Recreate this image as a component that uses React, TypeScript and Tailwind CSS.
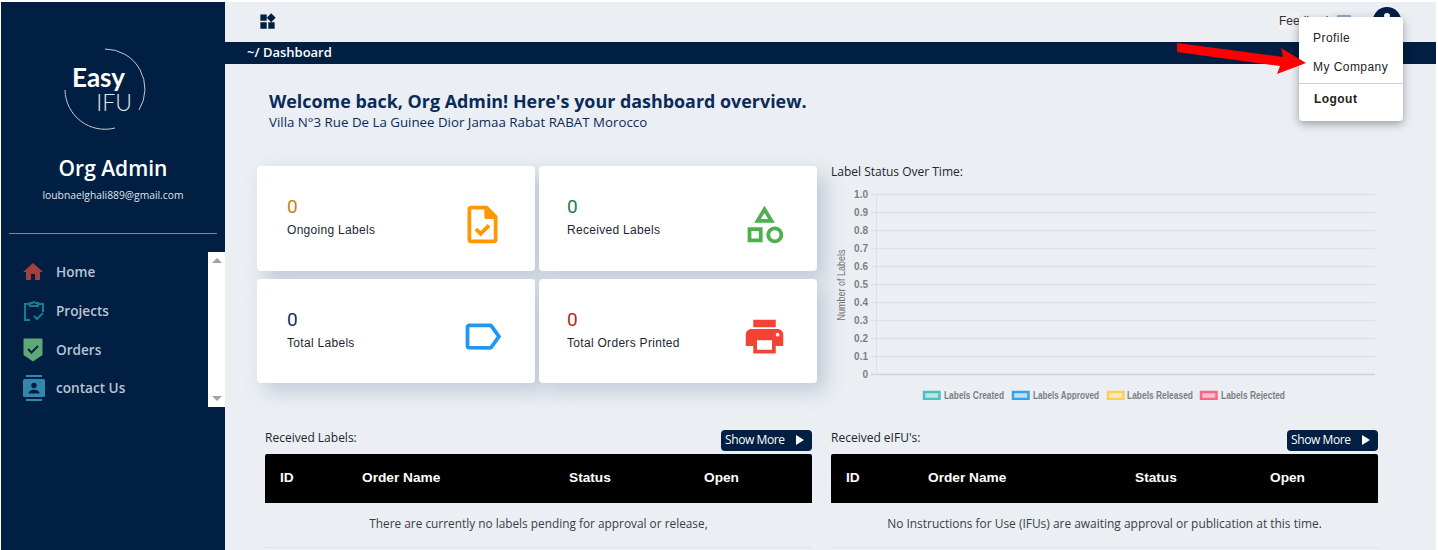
import { MdWidgets, MdOutlineCategory, MdOutlineLabel, MdPrint, MdHome } from 'react-icons/md'

const segoe = { fontFamily: '"Open Sans", sans-serif' }
const arial = { fontFamily: '"Liberation Sans", sans-serif' }

function FileCheckIcon() {
  return (
    <svg viewBox="0 0 24 24" className="w-[45px] h-[45px] ml-px text-[#ff9800]" fill="none" stroke="currentColor">
      <path d="M6 3h8l5 5v12a1 1 0 0 1-1 1H6a1 1 0 0 1-1-1V4a1 1 0 0 1 1-1z" strokeWidth="2" strokeLinejoin="round" />
      <path d="M14 3l5 5h-5z" fill="currentColor" strokeWidth="2" strokeLinejoin="round" />
      <path d="M8.500 14.500l2.500 2.500 4.500-4.500" strokeWidth="2" />
    </svg>
  )
}

function ProjectsIcon() {
  return (
    <svg viewBox="0 0 22 22" className="w-[22px] h-[22px] text-[#0f7f96]" fill="none" stroke="currentColor" strokeWidth="2">
      <path d="M6 4H2v16h5" />
      <path d="M16 4h4v8" />
      <path d="M7 6V3h2.500a1.600 1.600 0 0 1 3 0H15v3z" />
      <path d="M11 16l3 3 6-6" />
    </svg>
  )
}

function OrdersIcon() {
  return (
    <svg viewBox="0 0 20 24" className="w-[20px] h-[24px]">
      <path d="M1.500 0.500h17a1 1 0 0 1 1 1V17l-9.500 6.500L0.500 17V1.500a1 1 0 0 1 1-1z" fill="#5fa777" />
      <path d="M5 11l3.500 3.500L15 8" fill="none" stroke="#0c2340" strokeWidth="2" />
    </svg>
  )
}

function ContactIcon() {
  return (
    <svg viewBox="0 0 22 26" className="w-[22px] h-[26px] text-[#3387ad]">
      <rect x="3" y="0" width="16" height="2" fill="currentColor" />
      <rect x="3" y="24" width="16" height="2" fill="currentColor" />
      <rect x="0" y="4" width="22" height="18" rx="1.500" fill="currentColor" />
      <circle cx="11" cy="10.500" r="2.700" fill="#001f42" />
      <path d="M5.500 18.500c0-2.500 3-3.700 5.500-3.700s5.500 1.200 5.500 3.700z" fill="#001f42" />
    </svg>
  )
}

function Logo() {
  return (
    <div className="relative w-[84px] h-[84px]">
      <svg viewBox="0 0 84 84" className="absolute inset-0 w-full h-full" fill="none" stroke="#c4ccd6" strokeWidth="1">
        <path d="M42 2A40 40 0 0 1 76 63" />
        <path d="M2 43A40 40 0 0 0 52 81" />
      </svg>
      <div className="relative flex flex-col items-end pr-[15px] pt-[17px] text-white" style={{ fontFamily: 'Lato, sans-serif' }}>
        <span className="text-[26px] font-bold leading-[26px] mr-[7px]">Easy</span>
        <span className="text-[23px] font-light leading-[24px] text-[#e3e7ec]">IFU</span>
      </div>
    </div>
  )
}

function Sidebar() {
  const items = [
    { label: 'Home', icon: <MdHome className="w-[24px] h-[24px] -ml-[2px] text-[#a33f3f]" /> },
    { label: 'Projects', icon: <ProjectsIcon /> },
    { label: 'Orders', icon: <OrdersIcon /> },
    { label: 'contact Us', icon: <ContactIcon /> },
  ]
  return (
    <aside className="w-[224px] shrink-0 bg-[#001f42] flex flex-col" style={segoe}>
      <div className="flex justify-center pt-[45px] pr-[16px]">
        <Logo />
      </div>
      <div className="mt-[23px] text-center text-[21px] font-semibold leading-[28px] text-white">Org Admin</div>
      <div className="mt-[6px] text-center text-[10.300px] leading-[14px] text-[#dfe5ec]">loubnaelghali889@gmail.com</div>
      <div className="mx-[8px] mt-[31px] h-px bg-[#7f8b9c]" />
      <div className="mt-[18px] flex h-[155px]">
        <ul className="flex-1 pl-[22px] pt-px">
          {items.map((item) => (
            <li key={item.label} className="flex items-center h-[38.700px]">
              <span className="w-[33px] flex justify-start">{item.icon}</span>
              <span className="text-[13.600px] font-semibold text-[#b9c4d4]">{item.label}</span>
            </li>
          ))}
        </ul>
        <div className="w-[17px] bg-white flex flex-col items-center justify-between py-[6px]">
          <span className="w-0 h-0 border-x-[5px] border-x-transparent border-b-[5px] border-b-[#a3a3a3]" />
          <span className="w-0 h-0 border-x-[5px] border-x-transparent border-t-[5px] border-t-[#a3a3a3]" />
        </div>
      </div>
    </aside>
  )
}

function StatCard({ value, label, color, icon, narrow }: { value: string; label: string; color: string; icon: React.ReactNode; narrow?: boolean }) {
  return (
    <div className={`h-full bg-white rounded-[4px] shadow-[8px_8px_20px_rgba(80,105,140,0.28)] flex items-center justify-between pr-[30px] ${narrow ? 'pl-[28px]' : 'pl-[30px]'}`}>
      <div className="flex flex-col mb-[3px]">
        <span className="text-[19px] leading-[24px]" style={{ color, fontFamily: 'Roboto, sans-serif' }}>{value}</span>
        <span className="mt-[3px] text-[12px] leading-[16px] text-[#1c2733] tracking-[0.3px]" style={arial}>{label}</span>
      </div>
      <div className="mt-[12px]">{icon}</div>
    </div>
  )
}

function Chart() {
  const ticks = ['1.0', '0.9', '0.8', '0.7', '0.6', '0.5', '0.4', '0.3', '0.2', '0.1', '0']
  const legend = [
    { label: 'Labels Created', box: 92, text: 113, width: 60, color: '#4bc0c0', inner: '#b7e6e6' },
    { label: 'Labels Approved', box: 181, text: 202, width: 66, color: '#36a2eb', inner: '#bfe0f8' },
    { label: 'Labels Released', box: 276, text: 296, width: 66, color: '#ffce56', inner: '#ffebbb' },
    { label: 'Labels Rejected', box: 369, text: 390, width: 64, color: '#ff6384', inner: '#ffc1ce' },
  ]
  return (
    <svg viewBox="0 0 547 219" className="w-[547px] h-[219px]" style={arial}>
      {ticks.map((t, i) => (
        <g key={t}>
          <line x1="40" x2="544" y1={13.500 + i * 18} y2={13.500 + i * 18} stroke={i === 10 ? '#cfd3d8' : '#dde1e5'} strokeWidth="1.300" />
          <text x="37" y={17 + i * 18} textAnchor="end" fontSize="10" fontWeight="700" fill="#7a7f85">{t}</text>
        </g>
      ))}
      <line x1="45.500" x2="45.500" y1="13" y2="194" stroke="#dde1e5" />
      <text transform="translate(14 104) rotate(-90)" textAnchor="middle" fontSize="10" fill="#6d7278" textLength="71" lengthAdjust="spacingAndGlyphs">Number of Labels</text>
      {legend.map((l) => (
        <g key={l.label}>
          <rect x={l.box + 1} y="211" width="15.500" height="7" fill={l.inner} stroke={l.color} strokeWidth="2.500" />
          <text x={l.text} y="218" fontSize="10.500" fontWeight="700" fill="#7a7f85" textLength={l.width} lengthAdjust="spacingAndGlyphs">{l.label}</text>
        </g>
      ))}
    </svg>
  )
}

function TablePanel({ title, empty, textSize }: { title: string; empty: string; textSize: string }) {
  return (
    <div className="w-[547px]">
      <div className="flex justify-between items-start h-[24px]">
        <span className="text-[12px] leading-[16px] text-[#20262d]" style={segoe}>{title}</span>
        <button className="h-[21px] w-[91px] pl-[4px] pr-[8px] pb-px rounded-[4px] bg-[#001f42] text-white text-[12px] tracking-[-0.4px] flex items-center justify-between" style={segoe}>
          Show More
          <span className="w-0 h-0 border-y-[5px] border-y-transparent border-l-[8px] border-l-white" />
        </button>
      </div>
      <table className="w-full table-fixed border-collapse">
        <colgroup>
          <col className="w-[82px]" />
          <col className="w-[207px]" />
          <col className="w-[135px]" />
          <col />
        </colgroup>
        <thead>
          <tr className="bg-black text-white text-left text-[13.700px] h-[49px]" style={arial}>
            <th className="pl-[15px] font-bold rounded-tl-[2px]">ID</th>
            <th className="pl-[15px] font-bold">Order Name</th>
            <th className="pl-[15px] font-bold">Status</th>
            <th className="pl-[15px] font-bold rounded-tr-[2px]">Open</th>
          </tr>
        </thead>
        <tbody>
          <tr className="border-b border-[#dfe3e7]">
            <td colSpan={4} className={`h-[44px] pb-[2px] text-center text-[#3a4048] ${textSize}`} style={segoe}>{empty}</td>
          </tr>
        </tbody>
      </table>
    </div>
  )
}

function ProfileMenu() {
  return (
    <div className="absolute left-[1074px] top-[15px] w-[104px] h-[104px] bg-white rounded-[4px] shadow-[0_3px_10px_rgba(0,0,0,0.35)] pt-[6px] text-[12px] text-[#222] tracking-[0.45px]" style={arial}>
      <div className="pl-[14px] h-[29px] flex items-center">Profile</div>
      <div className="pl-[14px] h-[29px] flex items-center">My Company</div>
      <div className="mt-[2px] border-t border-[#cfcfcf] pl-[15px] h-[30px] flex items-center font-bold">Logout</div>
    </div>
  )
}

export default function App() {
  return (
    <div className="h-[550px] w-[1438px] overflow-hidden bg-white pt-[2px] pl-px flex">
      <Sidebar />
      <main className="relative w-[1211px] shrink-0 bg-[#ebeff3] flex flex-col">
        <div className="h-[40px] flex items-center justify-between pl-[33px] pr-[35px]">
          <MdWidgets className="w-[19px] h-[19px] mt-[-1px] text-[#001f42]" />
          <div className="flex items-start self-start">
            <span className="mt-[10px] w-[52px] text-[12px] leading-[18px] text-[#333] bg-[#f0f2f4] whitespace-nowrap" style={arial}>Feedback</span>
            <span className="mt-[13px] ml-[6px] w-[14px] h-[10px] bg-[#8fa9c9] rounded-[1px]" />
            <span className="mt-[5px] ml-[22px] w-[28px] h-[28px] rounded-full bg-[#001f42] flex justify-center pt-[6px]">
              <span className="w-[6px] h-[6px] rounded-full bg-white" />
            </span>
          </div>
        </div>
        <div className="h-[22px] bg-[#001f42] pl-[22px] text-[13px] font-semibold leading-[21px] text-white" style={segoe}>~/ Dashboard</div>

        <div className="pl-[44px] pt-[25px]" style={segoe}>
          <h1 className="text-[17.900px] font-bold leading-[24px] text-[#082b5c]">Welcome back, Org Admin! Here's your dashboard overview.</h1>
          <p className="text-[13.300px] leading-[18px] text-[#082b5c] font-medium">Villa N°3 Rue De La Guinee Dior Jamaa Rabat RABAT Morocco</p>
        </div>

        <div className="mt-[35px] pl-[32px] flex items-start">
          <div className="w-[560px] h-[217px] grid grid-cols-2 grid-rows-2 gap-x-[4px] gap-y-[8px]">
            <StatCard value="0" label="Ongoing Labels" color="#c9811a" icon={<FileCheckIcon />} />
            <StatCard narrow value="0" label="Received Labels" color="#1f7a52" icon={<MdOutlineCategory className="w-[45px] h-[45px] text-[#4caf50]" />} />
            <StatCard value="0" label="Total Labels" color="#14315c" icon={<MdOutlineLabel className="w-[45px] h-[45px] ml-px text-[#2196f3]" />} />
            <StatCard narrow value="0" label="Total Orders Printed" color="#b3261e" icon={<MdPrint className="w-[45px] h-[45px] text-[#f44336]" />} />
          </div>
          <div className="ml-[14px] w-[547px] mt-[-2px]">
            <div className="text-[12px] leading-[16px] text-[#20262d]" style={segoe}>Label Status Over Time:</div>
            <div className="mt-[1px]"><Chart /></div>
          </div>
        </div>

        <div className="absolute left-[40px] top-[428px] flex gap-[19px]">
          <TablePanel title="Received Labels:" textSize="text-[11.850px]" empty="There are currently no labels pending for approval or release," />
          <TablePanel title="Received eIFU's:" textSize="text-[11.950px]" empty="No Instructions for Use (IFUs) are awaiting approval or publication at this time." />
        </div>

        <ProfileMenu />

        <svg viewBox="0 0 135 36" className="absolute left-[951px] top-[40px] w-[135px] h-[36px]">
          <path d="M1 1 L107 15 L105 6 L130 21 L101 32 L104 24 L1 10 Z" fill="#ff0000" />
        </svg>
      </main>
    </div>
  )
}
